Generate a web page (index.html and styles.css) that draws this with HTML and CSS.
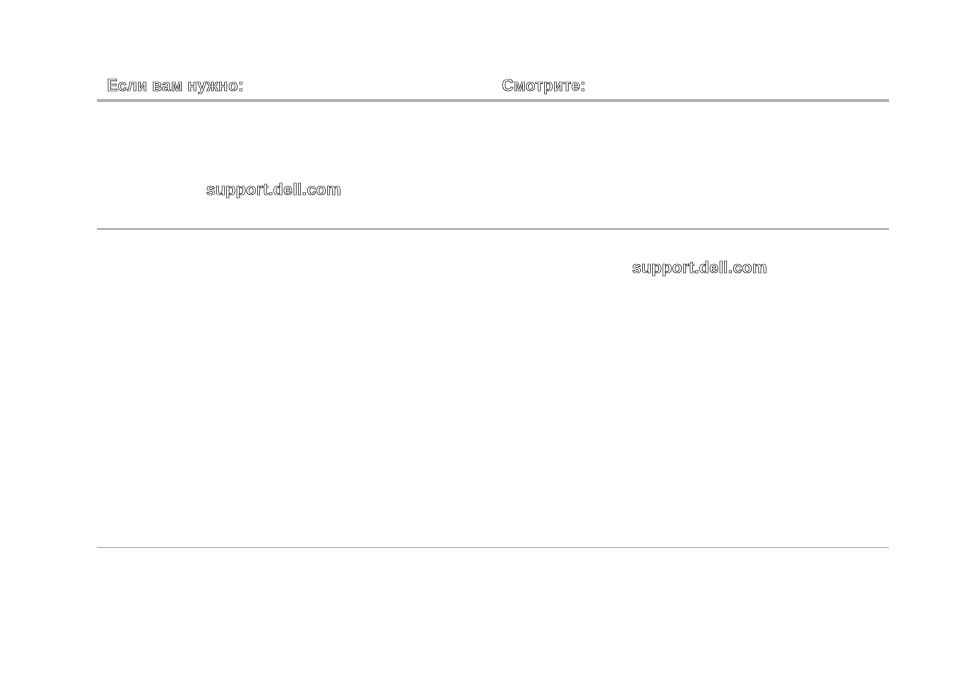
FILE: index.html
```html
<!DOCTYPE html>
<html lang="ru">
<head>
<meta charset="utf-8">
<link rel="stylesheet" href="styles.css">
</head>
<body>
<div class="table">
  <div class="row head">
    <div class="cell left"><span class="ol h">Если вам нужно:</span></div>
    <div class="cell right"><span class="ol h">Смотрите:</span></div>
  </div>
  <div class="row r1">
    <div class="cell left"><span class="ol link l1">support.dell.com</span></div>
    <div class="cell right"></div>
  </div>
  <div class="row r2">
    <div class="cell left"></div>
    <div class="cell right"><span class="ol link l2">support.dell.com</span></div>
  </div>
</div>
</body>
</html>
```
FILE: styles.css
```css
html, body {
  margin: 0;
  padding: 0;
  background: #fff;
}
body {
  font-family: "Liberation Sans", Arial, sans-serif;
}
.table {
  margin-left: 97px;
  width: 792px;
  padding-top: 75px;
}
.row {
  display: grid;
  grid-template-columns: 395px 1fr;
}
.head {
  height: 24px;
  border-bottom: 3px solid #b4b4b4;
}
.head .cell {
  padding-left: 10px;
  padding-top: 1px;
}
.r1 {
  height: 126px;
  border-bottom: 2px solid #b4b4b4;
}
.r2 {
  height: 317px;
  border-bottom: 1px solid #b4b4b4;
}
.ol {
  color: #fff;
  -webkit-text-stroke: 0.65px #2a2a2a;
  font-weight: bold;
  white-space: nowrap;
  display: inline-block;
  will-change: transform;
}
.h {
  font-size: 16px;
  line-height: 19px;
  letter-spacing: 0.2px;
}
.link {
  font-size: 16.8px;
  line-height: 20px;
}
.l1 {
  margin-left: 109px;
  margin-top: 78px;
}
.l2 {
  margin-left: 140px;
  margin-top: 28px;
}
```
